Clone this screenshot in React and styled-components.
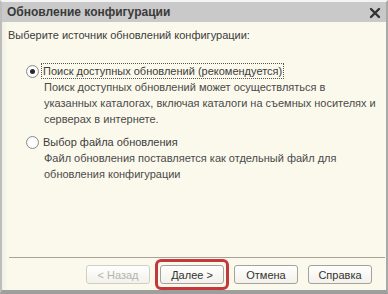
import styled, { createGlobalStyle } from 'styled-components';

const GlobalStyle = createGlobalStyle`
    html, body {
        margin: 0;
        padding: 0;
        background: #ffffff;
    }
    body {
        font-family: "Liberation Sans", Arial, sans-serif;
    }
`

export default function App() {
    return (
        <>
            <GlobalStyle />
            <Window>
                <TitleBar>
                    <Title>Обновление конфигурации</Title>
                    <Close>
                        <svg width="12" height="12" viewBox="0 0 12 12">
                            <path d="M2 2 L10 10 M10 2 L2 10" stroke="#333" strokeWidth="2.4" strokeLinecap="round" />
                        </svg>
                    </Close>
                </TitleBar>
                <Body>
                    <Prompt>Выберите источник обновлений конфигурации:</Prompt>
                    <Options>
                        <Option>
                            <RadioRow>
                                <Radio checked />
                                <Label focused>Поиск доступных обновлений (рекомендуется)</Label>
                            </RadioRow>
                            <Hint>
                                Поиск доступных обновлений может осуществляться в указанных каталогах, включая каталоги на съемных носителях и серверах в интернете.
                            </Hint>
                        </Option>
                        <Option>
                            <RadioRow>
                                <Radio />
                                <Label>Выбор файла обновления</Label>
                            </RadioRow>
                            <Hint>
                                Файл обновления поставляется как отдельный файл для обновления конфигурации
                            </Hint>
                        </Option>
                    </Options>
                    <Footer>
                        <Button disabled>&lt; Назад</Button>
                        <Button highlighted>Далее &gt;</Button>
                        <Button>Отмена</Button>
                        <Button>Справка</Button>
                    </Footer>
                </Body>
            </Window>
        </>
    )
}

const Window = styled.div`
    width: 388px;
    height: 294px;
    box-sizing: border-box;
    display: flex;
    flex-direction: column;
    background: #fbf9ec;
    border-top: 2px solid #f4f4f4;
    border-left: 2px solid #bdbdbb;
    border-right: 2px solid #a9a9a7;
    border-bottom: 4px solid #9e9e9c;
`

const TitleBar = styled.div`
    height: 20px;
    flex-shrink: 0;
    display: flex;
    align-items: center;
    justify-content: space-between;
    padding: 0 5px 0 5px;
    background: #c9c9c9;
`

const Title = styled.span`
    font-size: 12px;
    font-weight: bold;
    color: #3a3a3a;
`

const Close = styled.span`
    display: flex;
    margin-top: 1px;
`

const Body = styled.div`
    flex: 1;
    display: flex;
    flex-direction: column;
    padding: 0 0 0 5px;
    background: linear-gradient(to right, #f1f0e4 0, #fbf9ec 6px);
`

const Prompt = styled.p`
    margin: 7px 0 0 1px;
    font-size: 11px;
    color: #3c3c3c;
`

const Options = styled.div`
    display: flex;
    flex-direction: column;
    gap: 7px;
    margin-top: 22px;
    padding-left: 19px;
`

const Option = styled.div`
    display: flex;
    flex-direction: column;
`

const RadioRow = styled.div`
    display: flex;
    align-items: center;
    gap: 2px;
    height: 16px;
`

const Radio = styled.span`
    width: 11px;
    height: 11px;
    border-radius: 50%;
    border: 1px solid #8c8c8c;
    background: radial-gradient(circle, #ffffff 40%, #ececec 100%);
    display: flex;
    align-items: center;
    justify-content: center;

    &::after {
        content: "";
        width: 5px;
        height: 5px;
        border-radius: 50%;
        background: #2a2a2a;
        display: ${props => props.checked ? 'block' : 'none'};
    }
`

const Label = styled.span`
    font-size: 11px;
    color: #3c3c3c;
    padding: 1px 1px;
    border: 1px dotted ${props => props.focused ? '#555' : 'transparent'};
`

const Hint = styled.p`
    margin: 0 0 0 18px;
    font-size: 11px;
    line-height: 16px;
    color: #4a4a4a;
    max-width: 336px;
`

const Footer = styled.div`
    margin-top: auto;
    margin-right: 1px;
    margin-left: 2px;
    display: flex;
    justify-content: flex-end;
    gap: 10px;
    padding: 7px 13px 6px 0;
    border-top: 1px solid #a5a496;
`

const Button = styled.button`
    position: relative;
    width: 64px;
    height: 19px;
    padding: 0;
    font-family: "Liberation Sans", Arial, sans-serif;
    font-size: 11px;
    color: ${props => props.disabled ? '#b4b4b0' : '#333'};
    background: linear-gradient(to bottom, #ffffff, #f2f1ea);
    border: 1px solid ${props => props.disabled ? '#cfcfc8' : '#a3a39c'};
    border-radius: 3px;

    &::after {
        content: "";
        display: ${props => props.highlighted ? 'block' : 'none'};
        position: absolute;
        inset: -7px -6px -7px -6px;
        border: 3px solid #c4373a;
        border-radius: 6px;
    }
`
